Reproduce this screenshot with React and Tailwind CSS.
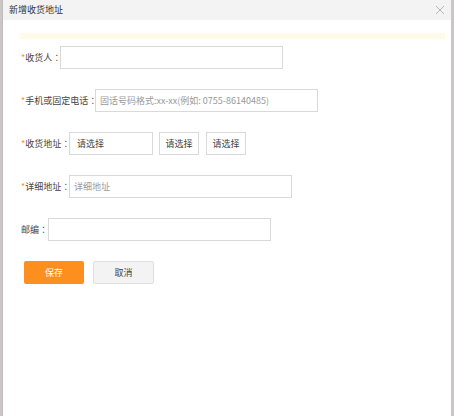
export default function App() {
  const font = { fontFamily: '"Noto Sans CJK SC", "Noto Sans", sans-serif' };
  const Star = () => <span className="text-[#f7931e]">*</span>;
  const Colon = () => <span style={{ fontFamily: '"Noto Sans CJK TC", "Noto Sans CJK SC", sans-serif' }}>：</span>;
  return (
    <div className="w-[454px] h-[416px] bg-[#cbc5c6] flex pl-[2px] pr-[3px]" style={font}>
      <div className="flex-1 bg-white flex flex-col border-l border-[#bdbdbd]">
        <div className="h-[20px] bg-[#f3f3f3] flex items-center justify-between pl-[6px] pr-[6px]">
          <span className="text-[9px] text-[#333]">新增收货地址</span>
          <svg width="10" height="10" viewBox="0 0 10 10" className="text-[#b0b0b0]">
            <path d="M1 1L9 9M9 1L1 9" stroke="currentColor" strokeWidth="0.9" fill="none" />
          </svg>
        </div>
        <div className="pl-[18px] pr-[6px] pt-[13px] text-[9px] text-[#444]">
          <div className="h-[6px] bg-[#fffbe8] -ml-[1px]" />
          <div className="flex flex-col gap-[20px] mt-[7px]">
            <div className="flex items-center h-[23px]">
              <span className="w-[39px] whitespace-nowrap"><Star />收货人<Colon /></span>
              <div className="w-[223px] h-[23px] border border-[#d9d9d9]" />
            </div>
            <div className="flex items-center h-[23px]">
              <span className="w-[74px] whitespace-nowrap"><Star />手机或固定电话<Colon /></span>
              <div className="w-[223px] h-[23px] border border-[#d9d9d9] flex items-center pl-[4px] text-[#999] whitespace-nowrap">
                固话号码格式:xx-xx(例如: 0755-86140485)
              </div>
            </div>
            <div className="flex items-center h-[23px]">
              <span className="w-[48px] whitespace-nowrap"><Star />收货地址<Colon /></span>
              <div className="w-[84px] h-[23px] border border-[#d9d9d9] flex items-center pl-[7px]">请选择</div>
              <div className="w-[40px] h-[23px] border border-[#d9d9d9] flex items-center justify-center ml-[6px]">请选择</div>
              <div className="w-[40px] h-[23px] border border-[#d9d9d9] flex items-center justify-center ml-[7px]">请选择</div>
            </div>
            <div className="flex items-center h-[23px]">
              <span className="w-[48px] whitespace-nowrap"><Star />详细地址<Colon /></span>
              <div className="w-[223px] h-[23px] border border-[#d9d9d9] flex items-center pl-[4px] text-[#999]">详细地址</div>
            </div>
            <div className="flex items-center h-[23px]">
              <span className="w-[27px] whitespace-nowrap">邮编<Colon /></span>
              <div className="w-[223px] h-[23px] border border-[#d9d9d9]" />
            </div>
            <div className="flex items-center h-[23px] pl-[3px]">
              <div className="w-[60px] h-[23px] bg-[#fd8f1e] rounded-[2px] flex items-center justify-center text-white">保存</div>
              <div className="w-[61px] h-[23px] bg-[#f3f3f3] border border-[#e0e0e0] rounded-[2px] flex items-center justify-center ml-[9px]">取消</div>
            </div>
          </div>
        </div>
      </div>
    </div>
  );
}
